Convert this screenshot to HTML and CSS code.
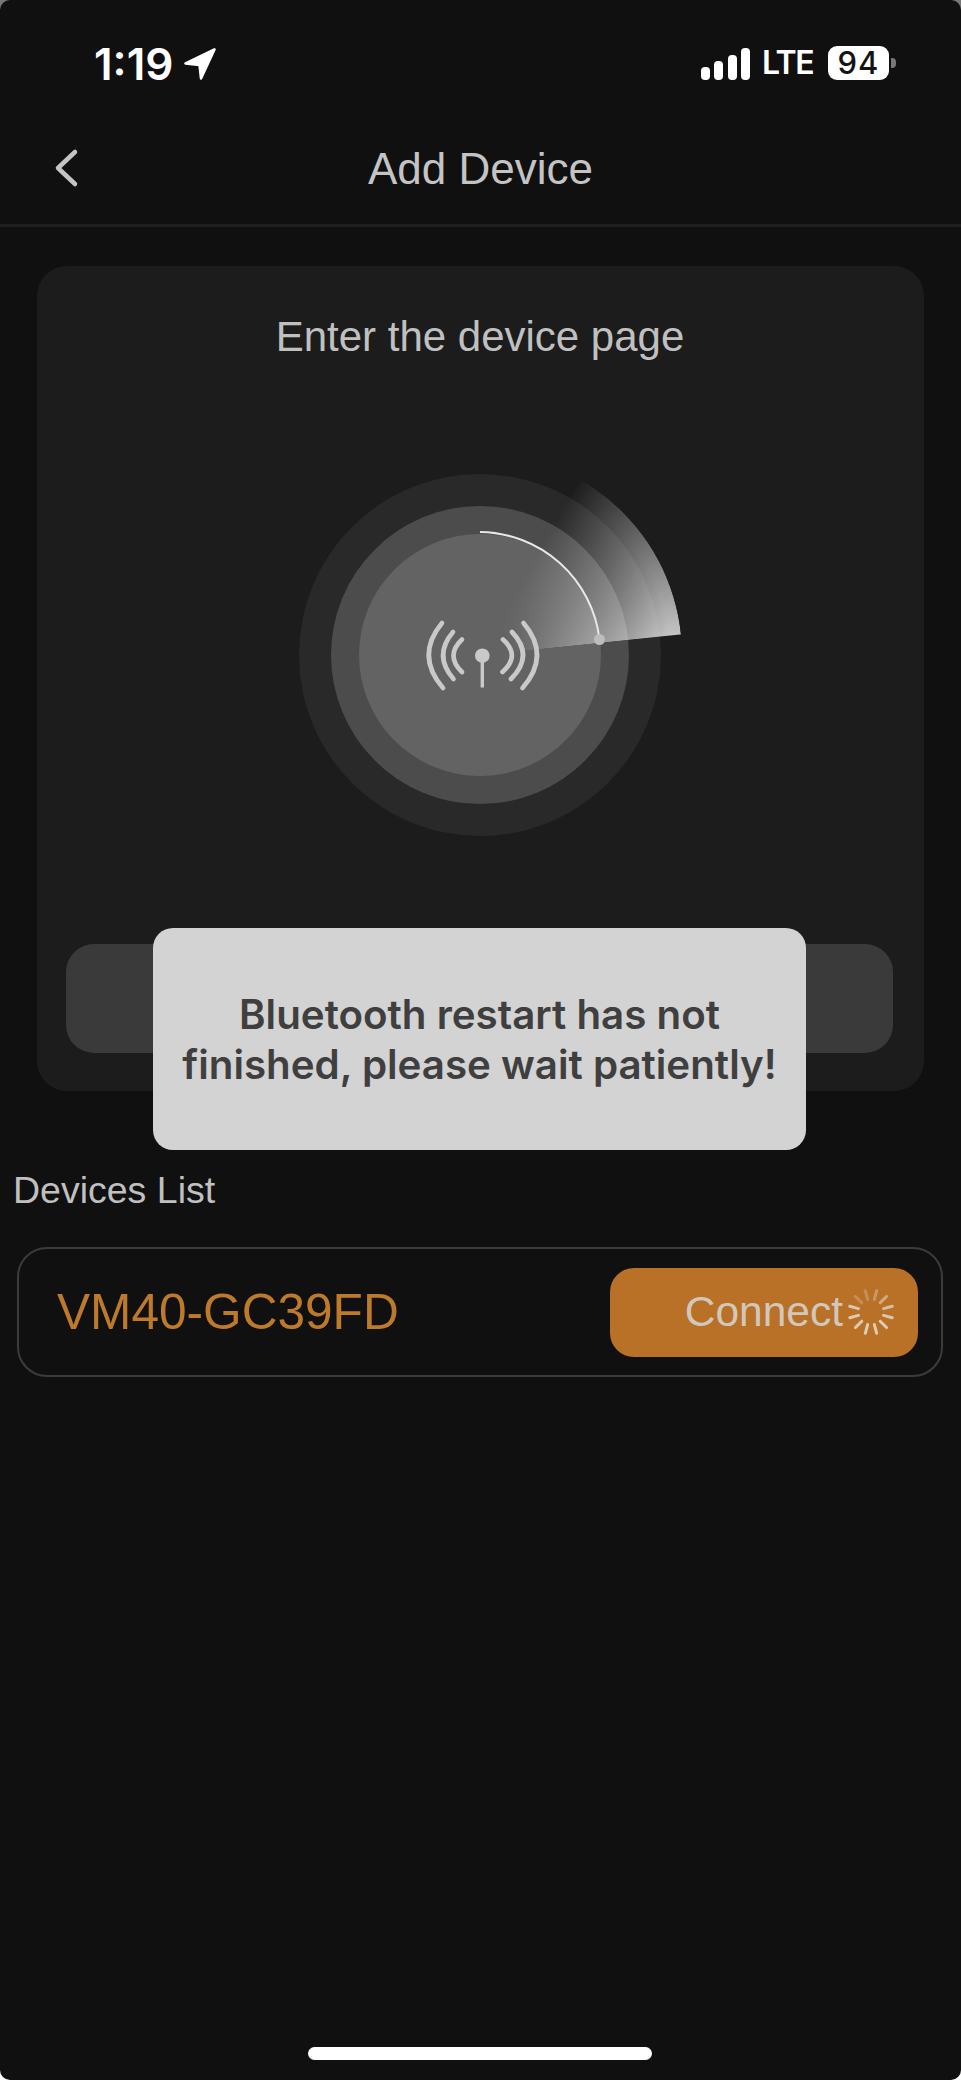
FILE: index.html
```html
<!DOCTYPE html>
<html lang="en">
<head>
<meta charset="utf-8">
<title>Add Device</title>
<link rel="stylesheet" href="styles.css">
</head>
<body>
<div class="screen">
  <div class="status">
    <div class="status-left">
      <span class="time">1:19</span>
      <svg class="loc" viewBox="0 0 32 32"><path d="M30.500 1.500 1.500 15.500 15.500 17 17 30.500Z" fill="#fff" stroke="#fff" stroke-width="2.500" stroke-linejoin="round"/></svg>
    </div>
    <div class="status-right">
      <div class="signal"><i class="b1"></i><i class="b2"></i><i class="b3"></i><i class="b4"></i></div>
      <span class="lte">LTE</span>
      <div class="battery"><span class="batt-body">94</span><i class="batt-cap"></i></div>
    </div>
  </div>
  <header class="nav">
    <svg class="back" viewBox="0 0 28 42"><path d="M23 5 6 21l17 16" fill="none" stroke="#c4c4c4" stroke-width="4.500" stroke-linecap="round" stroke-linejoin="round"/></svg>
    <h1 class="title">Add Device</h1>
  </header>
  <main class="content">
    <section class="card">
      <p class="card-title">Enter the device page</p>
      <div class="radar">
        <div class="ring ring-outer"><div class="ring ring-mid"><div class="ring ring-inner"></div></div></div>
        <div class="sweep"></div>
        <svg class="radar-art" viewBox="0 0 420 420">
          <path d="M208 88A122 122 0 0 1 327.500 195" fill="none" stroke="#e8e8e8" stroke-width="2"/>
          <circle cx="327.500" cy="195.500" r="5.500" fill="#bdbdbd"/>
          <g fill="none" stroke="#c9c9c9" stroke-linecap="round" stroke-width="4.700">
            <path d="M170 179Q143 211.500 171 244"/>
            <path d="M181 188Q161 211.500 181.500 235"/>
            <path d="M190 195.500Q173 211.500 190 228"/>
            <path d="M251.500 179Q279 211.500 250.500 244"/>
            <path d="M240 188Q262.500 211.500 239 235"/>
            <path d="M231 195.500Q249 211.500 230.500 228"/>
          </g>
          <circle cx="210.300" cy="211.700" r="7.300" fill="#c9c9c9"/>
          <rect x="208.600" y="214" width="3.400" height="29.500" fill="#c9c9c9"/>
        </svg>
      </div>
      <button class="search-btn" type="button"></button>
    </section>
    <h2 class="list-title">Devices List</h2>
    <div class="device">
      <span class="device-name">VM40-GC39FD</span>
      <button class="connect" type="button">
        <span>Connect</span>
        <svg class="spinner" viewBox="0 0 48 48" fill="none" stroke="#dccbb5" stroke-width="3" stroke-linecap="round">
          <path d="M24 2v9" transform="rotate(15 24 24)" opacity=".45"/>
          <path d="M24 2v9" transform="rotate(45 24 24)" opacity=".65"/>
          <path d="M24 2v9" transform="rotate(75 24 24)" opacity=".85"/>
          <path d="M24 2v9" transform="rotate(105 24 24)" opacity=".95"/>
          <path d="M24 2v9" transform="rotate(135 24 24)"/>
          <path d="M24 2v9" transform="rotate(165 24 24)"/>
          <path d="M24 2v9" transform="rotate(195 24 24)"/>
          <path d="M24 2v9" transform="rotate(225 24 24)"/>
          <path d="M24 2v9" transform="rotate(255 24 24)"/>
          <path d="M24 2v9" transform="rotate(285 24 24)" opacity=".95"/>
          <path d="M24 2v9" transform="rotate(315 24 24)" opacity=".35"/>
          <path d="M24 2v9" transform="rotate(345 24 24)" opacity=".35"/>
        </svg>
      </button>
    </div>
  </main>
  <div class="toast">Bluetooth restart has not<br>finished, please wait patiently!</div>
  <div class="home"></div>
</div>
</body>
</html>
```
FILE: styles.css
```css
* { box-sizing: border-box; }
html, body { margin: 0; padding: 0; background: linear-gradient(#777 50%, #fff 50%); }
.screen { position: relative; width: 961px; height: 2080px; background: #101010; border-radius: 10px; overflow: hidden; display: flex; flex-direction: column; font-family: "Liberation Sans", Arial, sans-serif; color: #c6c6c6; }
.status { height: 114px; flex: none; display: flex; justify-content: space-between; align-items: flex-start; padding: 46px 65px 0 94px; }
.status-left { display: flex; align-items: center; gap: 11px; }
.time { font-family: Inter, sans-serif; font-weight: 600; font-size: 44px; line-height: 36px; color: #fff; }
.loc { width: 32px; height: 32px; }
.status-right { display: flex; align-items: center; gap: 12px; }
.signal { display: flex; align-items: flex-end; gap: 4.300px; height: 33px; }
.signal i { display: block; width: 9px; background: #fff; border-radius: 4px; }
.b1 { height: 13px; } .b2 { height: 19px; } .b3 { height: 25px; } .b4 { height: 32px; }
.lte { font-family: Inter, sans-serif; font-weight: 600; font-size: 32px; line-height: 34px; color: #fff; letter-spacing: -1.500px; }
.battery { display: flex; align-items: center; gap: 2px; margin-left: 3px; }
.batt-body { display: block; width: 61px; height: 34px; background: #fff; border-radius: 9px; color: #141414; font-family: Inter, sans-serif; font-weight: 500; font-size: 31px; line-height: 34px; text-align: center; letter-spacing: 1px; }
.batt-cap { display: block; width: 5px; height: 10px; background: #777; border-radius: 0 4px 4px 0; }
.nav { height: 113px; flex: none; position: relative; display: flex; align-items: center; justify-content: center; border-bottom: 3px solid #1f1f1f; }
.back { position: absolute; left: 52px; top: 33px; width: 28px; height: 42px; }
.title { margin: 0; font-weight: 400; font-size: 44px; color: #c4c4c4; }
.content { flex: 1; display: flex; flex-direction: column; padding: 39px 18px 0 17px; }
.card { width: 887px; height: 825px; margin-left: 20px; background: #1c1c1c; border-radius: 30px; padding: 47px 30px 0 29px; display: flex; flex-direction: column; }
.card-title { margin: 0; text-align: center; font-size: 42px; line-height: 47px; color: #c0c0c0; }
.radar { position: relative; width: 420px; height: 420px; margin: 84px 0 0 206px; }
.ring { border-radius: 50%; display: flex; align-items: center; justify-content: center; }
.ring-outer { position: absolute; left: 27px; top: 29.500px; width: 362px; height: 362px; background: #292929; }
.ring-mid { width: 298px; height: 298px; background: #4c4c4c; }
.ring-inner { width: 242px; height: 242px; background: #636363; }
.sweep { position: absolute; left: 6px; top: 8.500px; width: 404px; height: 404px; border-radius: 50%; background: conic-gradient(rgba(255,255,255,0) 0deg, rgba(255,255,255,0) 29deg, rgba(255,255,255,.74) 84deg, rgba(255,255,255,0) 84.300deg, rgba(255,255,255,0) 360deg); -webkit-mask-image: radial-gradient(circle closest-side, transparent 30px, #000 190px); mask-image: radial-gradient(circle closest-side, transparent 30px, #000 190px); }
.radar-art { position: absolute; inset: 0; width: 420px; height: 420px; }
.search-btn { display: block; width: 827px; height: 109px; margin-top: 80px; border: 0; border-radius: 28px; background: #3a3a3a; }
.list-title { margin: 77px 0 0 -4px; font-weight: 400; font-size: 37.500px; line-height: 44px; color: #c0c0c0; }
.device { margin-top: 35px; width: 926px; height: 130px; border: 2px solid #3c3c3c; border-radius: 30px; display: flex; align-items: center; justify-content: space-between; padding: 0 23px 0 38px; }
.device-name { font-size: 49.600px; color: #bd7a2b; }
.connect { width: 308px; height: 89px; border: 0; border-radius: 24px; background: #b97027; color: #d1c8bd; font-family: "Liberation Sans", Arial, sans-serif; font-size: 42.500px; display: flex; align-items: center; justify-content: flex-end; gap: 4px; padding: 0 23px 0 0; }
.spinner { width: 48px; height: 48px; flex: none; }
.toast { position: absolute; left: 153px; top: 928px; width: 653px; height: 222px; background: #d3d3d3; border-radius: 20px; color: #3f3f3f; font-family: Inter, sans-serif; font-weight: 600; font-size: 40.300px; line-height: 50px; text-align: center; padding-top: 62px; }
.home { position: absolute; left: 308px; top: 2047px; width: 344px; height: 13px; background: #fff; border-radius: 7px; }
```
